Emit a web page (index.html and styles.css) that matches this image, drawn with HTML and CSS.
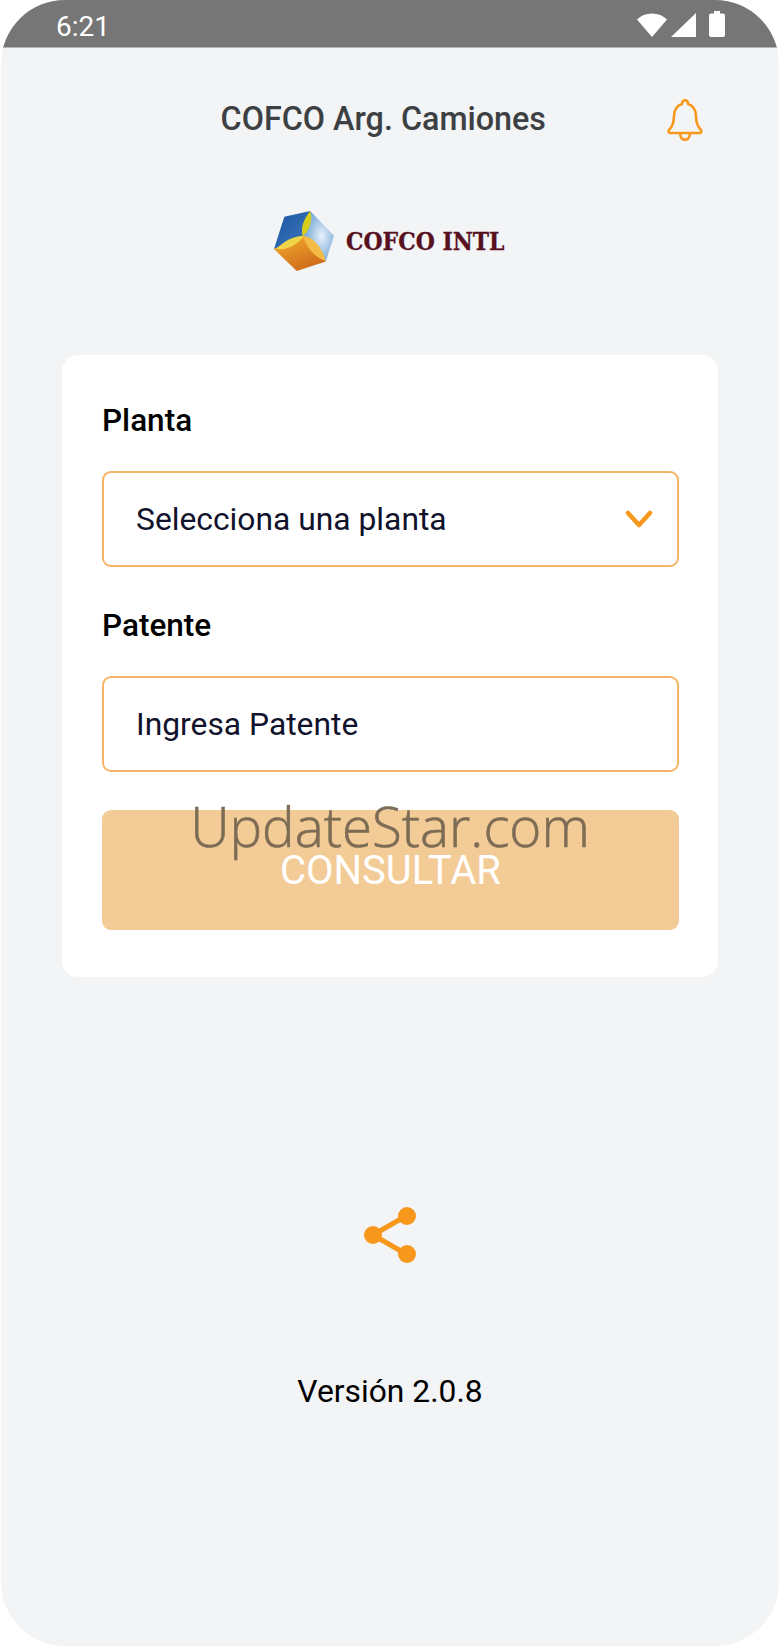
FILE: index.html
```html
<!DOCTYPE html>
<html lang="es">

<head>
    <meta charset="UTF-8">
    <meta name="viewport" content="width=device-width, initial-scale=1.0">
    <title>COFCO Arg. Camiones</title>
    <link rel="stylesheet" href="styles.css">
</head>

<body>
    <div class="phone">
        <div class="statusbar">
            <span class="clock">6:21</span>
            <div class="status-icons">
                <svg width="30" height="24" viewBox="0 0 30 24"><path d="M0 6.500C3.800 2.600 9.100 0.500 15 0.500s11.200 2.100 15 6L15 24z" fill="#fff"/></svg>
                <svg class="signal" width="25" height="24" viewBox="0 0 25 24"><path d="M25 0v24H0z" fill="#fff"/></svg>
                <svg width="16" height="26" viewBox="0 0 16 26"><path d="M5 0h6v2.500h3a2 2 0 0 1 2 2V24a2 2 0 0 1-2 2H2a2 2 0 0 1-2-2V4.500a2 2 0 0 1 2-2h3z" fill="#fff"/></svg>
            </div>
        </div>

        <div class="header">
            <h1>COFCO Arg. Camiones</h1>
            <svg class="bell" width="38" height="44" viewBox="0 0 38 44" fill="none" stroke="#f7981d" stroke-width="2.600" stroke-linejoin="round">
                <path d="M3 33c4-4 5-8 5-14 0-7 4-11 8-12 0-5 6-5 6 0 4 1 8 5 8 12 0 6 1 10 5 14 1 1.500 0 3-1.500 3H4.500C3 36 2 34.500 3 33z"/>
                <path d="M14 36c0 9 10 9 10 0"/>
            </svg>
        </div>

        <div class="logo">
            <svg width="60" height="60" viewBox="0 0 58 63" preserveAspectRatio="none">
                <defs>
                    <linearGradient id="cubeBlue" x1="0" y1="0" x2="1" y2="1">
                        <stop offset="0" stop-color="#1a55a5"/>
                        <stop offset="1" stop-color="#3f78b8"/>
                    </linearGradient>
                    <radialGradient id="cubeLight" cx="0.6" cy="0.5" r="0.65">
                        <stop offset="0" stop-color="#e6f1fa"/>
                        <stop offset="1" stop-color="#5f98cf"/>
                    </radialGradient>
                    <linearGradient id="cubeOrange" x1="0" y1="0" x2="0.6" y2="1">
                        <stop offset="0" stop-color="#f4b02c"/>
                        <stop offset="1" stop-color="#cf6a1c"/>
                    </linearGradient>
                </defs>
                <path d="M10 6L35 0 28 26 0 40z" fill="url(#cubeBlue)"/>
                <path d="M35 0L58 26 50 53 28 26z" fill="url(#cubeLight)"/>
                <path d="M0 40L28 26 50 53 22 63z" fill="url(#cubeOrange)"/>
                <path d="M35 0C29 8 25 18 28 27 34 20 38 10 35 0z" fill="#d8cc1c"/>
                <path d="M2 40C10 31 20 26 29 26 25 33 14 42 2 40z" fill="#efd648"/>
                <path d="M28 26C38 27 46 38 50 52 40 50 31 38 28 26z" fill="#f3bd45"/>
            </svg>
            <span class="logo-text">COFCO INTL</span>
        </div>

        <div class="card">
            <label class="field-label">Planta</label>
            <div class="field">
                <span>Selecciona una planta</span>
                <svg width="28" height="18" viewBox="0 0 28 18" fill="none" stroke="#f7981d" stroke-width="4.500" stroke-linecap="round" stroke-linejoin="round"><path d="M3 3l11 12L25 3"/></svg>
            </div>
            <label class="field-label">Patente</label>
            <div class="field">
                <span>Ingresa Patente</span>
            </div>
            <button class="btn" type="button">CONSULTAR</button>
            <div class="watermark">UpdateStar.com</div>
        </div>

        <div class="share">
            <svg width="52" height="56" viewBox="0 0 52 56">
                <path d="M9 28L42 9M9 28l33 19" stroke="#f7981d" stroke-width="5" fill="none"/>
                <circle cx="9" cy="28" r="9" fill="#f7981d"/>
                <circle cx="43" cy="9" r="9" fill="#f7981d"/>
                <circle cx="43" cy="47" r="9" fill="#f7981d"/>
            </svg>
        </div>

        <p class="version">Versión 2.0.8</p>
    </div>
</body>
</html>
```

FILE: styles.css
```css
body {
    margin: 0;
    padding: 0;
    background-color: #fff;
    font-family: Roboto, sans-serif;
}

.phone {
    width: 778px;
    height: 1646px;
    margin-left: 1px;
    background-color: #f2f4f6;
    border-radius: 64px;
    overflow: hidden;
}

.statusbar {
    height: 48px;
    background-color: #767676;
    border-bottom: 1px solid #b5b5b5;
    box-sizing: border-box;
    display: flex;
    justify-content: space-between;
    align-items: center;
    padding: 0 54px 0 55px;
    color: white;
}

.clock {
    margin-top: 6px;
    font-size: 28px;
}

.status-icons {
    display: flex;
    align-items: flex-end;
    gap: 4px;
}

.signal {
    margin-right: 9px;
}

.header {
    display: flex;
    align-items: center;
    justify-content: flex-end;
    height: 44px;
    margin-top: 49px;
    padding-right: 75px;
}

.header h1 {
    margin: 0 120px 0 0;
    font-size: 32.300px;
    font-weight: 500;
    color: #3d4043;
}

.bell {
    flex: none;
}

.logo {
    display: flex;
    align-items: center;
    margin: 69px 0 0 273px;
    height: 62px;
}

.logo-text {
    margin-left: 12px;
    font-family: "DejaVu Serif", serif;
    font-size: 24.400px;
    font-weight: bold;
    font-stretch: condensed;
    -webkit-text-stroke: 0.3px #56101e;
    color: #56101e;
    white-space: nowrap;
}

.card {
    position: relative;
    box-sizing: border-box;
    width: 656px;
    height: 622px;
    margin: 83px 0 0 61px;
    padding: 46px 39px 0 40px;
    background: white;
    border-radius: 16px;
}

.field-label {
    display: block;
    font-size: 31.500px;
    font-weight: 500;
    line-height: 40px;
    color: #000;
}

.field {
    box-sizing: border-box;
    height: 96px;
    margin: 30px 0 44px;
    padding: 0 24px 0 32px;
    display: flex;
    align-items: center;
    justify-content: space-between;
    border: 2px solid #f5b565;
    border-radius: 9px;
    font-size: 31.800px;
    color: #11122b;
}

.field + .field-label {
    margin-top: -5px;
}

.btn {
    display: block;
    width: 100%;
    height: 120px;
    margin-top: -6px;
    padding: 0;
    border: none;
    border-radius: 9px;
    background: #f3cb96;
    color: white;
    font-family: Roboto, sans-serif;
    font-size: 40px;
    font-weight: 400;
}

.watermark {
    position: absolute;
    left: 0;
    right: 0;
    top: 436px;
    text-align: center;
    font-family: "Open Sans", sans-serif;
    font-size: 54.700px;
    font-weight: 300;
    -webkit-text-stroke: 0.6px #7d6c55;
    line-height: 70px;
    color: #7d6c55;
    white-space: nowrap;
}

.share {
    display: flex;
    justify-content: center;
    margin-top: 230px;
}

.version {
    margin: 109px 0 0;
    text-align: center;
    font-size: 31.800px;
    color: #000;
}
```
